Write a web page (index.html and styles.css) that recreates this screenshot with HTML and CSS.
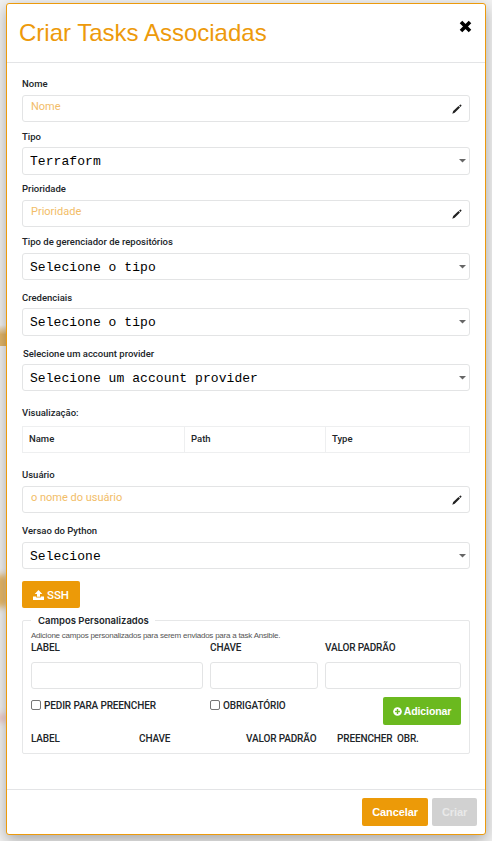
FILE: index.html
```html
<!DOCTYPE html>
<html lang="pt-BR">
<head>
<meta charset="utf-8">
<title>Criar Tasks Associadas</title>
<link rel="stylesheet" href="styles.css">
</head>
<body>
<div class="glow glow-a"></div>
<div class="glow glow-b"></div>
<div class="glow glow-c"></div>
<svg class="defs" width="0" height="0" aria-hidden="true">
  <symbol id="pencil" viewBox="0 0 10 10"><path d="M.3 9.7 1.2 7 6.5 2.1 8 3.6 2.7 8.8zM7.1 1.6 8.1.7Q8.6.3 9 .8L9.4 1.2Q9.7 1.6 9.3 2L8.4 3z"/></symbol>
</svg>
<main class="modal">
  <header class="modal-header">
    <h1><span>Criar Tasks Associadas</span></h1>
    <svg class="close" viewBox="0 0 13 13"><path d="M2 2 11 11M11 2 2 11"/></svg>
  </header>
  <section class="modal-body">
    <div class="field f-nome"><label>Nome</label><div class="input"><span>Nome</span><svg><use href="#pencil"/></svg></div></div>
    <div class="field f-tipo"><label>Tipo</label><div class="select tall"><span>Terraform</span><i></i></div></div>
    <div class="field f-prio"><label>Prioridade</label><div class="input"><span>Prioridade</span><svg><use href="#pencil"/></svg></div></div>
    <div class="field f-repo"><label>Tipo de gerenciador de repositórios</label><div class="select"><span>Selecione o tipo</span><i></i></div></div>
    <div class="field f-cred"><label>Credenciais</label><div class="select tall"><span>Selecione o tipo</span><i></i></div></div>
    <div class="field f-acct"><label>Selecione um account provider</label><div class="select"><span>Selecione um account provider</span><i></i></div></div>
    <div class="field f-view"><label>Visualização:</label>
      <div class="table"><b>Name</b><b>Path</b><b>Type</b></div>
    </div>
    <div class="field f-user"><label>Usuário</label><div class="input"><span>o nome do usuário</span><svg><use href="#pencil"/></svg></div></div>
    <div class="field f-py"><label>Versao do Python</label><div class="select"><span>Selecione</span><i></i></div></div>
    <button class="btn ssh"><svg viewBox="0 0 11 10"><path d="M5.5 0 9.3 4H7V6.8H4V4H1.7zM0 6.6H3.2V7.6H7.8V6.6H11V10H0z"/></svg><span>SSH</span></button>
    <div class="custom">
      <div class="legend"><span>Campos Personalizados</span></div>
      <p class="hint"><span>Adicione campos personalizados para serem enviados para a task Ansible.</span></p>
      <div class="cols caps"><span>LABEL</span><span>CHAVE</span><span>VALOR PADRÃO</span></div>
      <div class="cols boxes"><input><input><input></div>
      <div class="options caps">
        <label><i class="check"></i><span>PEDIR PARA PREENCHER</span></label>
        <label><i class="check"></i><span>OBRIGATÓRIO</span></label>
        <button class="btn add"><svg viewBox="0 0 10 10"><circle cx="5" cy="5" r="4.8"/><path d="M5 2.3V7.7M2.3 5H7.7"/></svg><span>Adicionar</span></button>
      </div>
      <div class="list caps"><span>LABEL</span><span>CHAVE</span><span>VALOR PADRÃO</span><span>PREENCHER</span><span>OBR.</span></div>
    </div>
  </section>
  <footer class="modal-footer">
    <button class="btn cancel"><span>Cancelar</span></button>
    <button class="btn create"><span>Criar</span></button>
  </footer>
</main>
</body>
</html>
```
FILE: styles.css
```css
* { box-sizing: border-box; }
body { margin: 0; height: 841px; overflow: hidden; background: #f2f2f2; font-family: "Liberation Sans", Arial, sans-serif; color: #212529; }
.defs { position: absolute; }
.glow { position: absolute; left: -6px; width: 14px; }
.glow-a { top: 325px; height: 21px; background: linear-gradient(#e8b76500, #e3b668 45%); }
.glow-b { top: 575px; height: 32px; background: #e8b765; filter: blur(3px); }
.glow-c { top: 714px; height: 8px; background: #f0c8c8; filter: blur(3px); }
.modal { position: relative; display: flex; flex-direction: column; width: 480px; height: 832px; margin: 3px 0 0 6px; background: #fff; border: 1px solid #ec9a0c; border-radius: 3px; box-shadow: 0 5px 15px rgba(0,0,0,.32); }
.modal-header { display: flex; justify-content: space-between; height: 59px; padding: 12px 13px 0 12px; border-bottom: 1px solid #e3e4e6; }
h1 { margin: 0; font-size: 24px; line-height: 34px; font-weight: 400; color: #ed9a0b; white-space: nowrap; }
.close { width: 13px; height: 13px; margin-top: 4px; stroke: #000; stroke-width: 3.6; fill: none; }
.modal-body { flex: 1; padding: 0 15px; }
.field label { display: block; height: 12px; margin-bottom: 5px; font: 500 9.5px/12px Roboto, sans-serif; white-space: nowrap; }
.f-nome { padding-top: 15px; }
.f-tipo { padding-top: 9px; }
.f-prio { padding-top: 8px; }
.f-repo { padding-top: 9px; }
.f-cred, .f-acct { padding-top: 12px; }
.f-tipo label, .f-cred label, .f-acct label { margin-bottom: 4px; }
.f-acct label { padding-left: 1px; }
.f-view { padding-top: 16px; }
.f-view label { margin-bottom: 7px; }
.f-user { padding-top: 16px; }
.f-py { padding-top: 12px; }
.input, .select { display: flex; justify-content: space-between; height: 27px; border: 1px solid #e3e4e5; border-radius: 3px; white-space: nowrap; }
.tall { height: 28px; }
.input { padding: 0 7px 0 8px; font: 400 11px/22px Roboto, sans-serif; color: #f2bd68; }
.input svg { width: 10px; height: 10px; margin-top: 8px; fill: #222; }
.select { padding: 0 3px 0 7px; font: 400 13px/27px "Liberation Mono", monospace; letter-spacing: .06px; color: #000; }
.select i { width: 7px; height: 4px; margin-top: 11px; background: #666; clip-path: polygon(0 0, 100% 0, 50% 90%); }
.table { display: grid; grid-template-columns: 162px 141px 1fr; height: 27px; border: 1px solid #eeeff0; }
.table b { padding-left: 6px; font: 500 9.5px/24px Roboto, sans-serif; border-right: 1px solid #eeeff0; }
.table b:last-child { border: 0; }
.btn { display: flex; align-items: center; justify-content: center; padding: 0; border: 0; border-radius: 2px; color: #fff; background: #ec9a08; font: 700 11px "Liberation Sans", Arial, sans-serif; letter-spacing: -.1px; white-space: nowrap; }
.ssh { width: 58px; height: 27px; margin-top: 12px; gap: 3px; font: 500 11.5px Roboto, sans-serif; }
.ssh svg { width: 11px; height: 10px; fill: #fff; }
.custom { height: 134px; margin-top: 12px; padding: 0 8px; border: 1px solid #e6e7e8; border-radius: 2px; }
.legend { width: 124px; height: 12px; margin-top: -6px; padding-left: 7px; background: #fff; font: 600 9.5px/12px Inter, sans-serif; white-space: nowrap; }
.hint { height: 12px; margin: 3px 0 0; font-size: 8px; line-height: 12px; letter-spacing: -.235px; color: #555; white-space: nowrap; }
.caps { font: 500 10px/12px Roboto, sans-serif; letter-spacing: -.13px; white-space: nowrap; }
.cols { display: grid; grid-template-columns: 172px 108px 136px; gap: 7px; }
.boxes { margin-top: 8px; }
.boxes input { width: 100%; height: 27px; border: 1px solid #e3e4e5; border-radius: 3px; }
.options { display: grid; grid-template-columns: 179px 173px 78px; height: 36px; }
.options label { display: flex; gap: 3px; margin-top: 11px; }
.check { width: 10px; height: 10px; border: 1px solid #767676; border-radius: 2px; }
.add { width: 78px; height: 28px; margin-top: 8px; gap: 2px; background: #6bb91f; font-size: 10.5px; }
.add svg { width: 9px; height: 9px; fill: #fff; stroke: #6bb91f; stroke-width: 1.6; }
.add circle { stroke: none; }
.list { display: grid; grid-template-columns: 108px 107px 91px 60px 1fr; margin-top: 8px; }
.modal-footer { display: flex; justify-content: flex-end; gap: 4px; height: 45px; padding: 8px 8px 0; border-top: 1px solid #e3e4e6; }
.cancel { width: 66px; height: 28px; }
.create { width: 45px; height: 28px; background: #d1d1d1; color: #e9e9e9; }
```
